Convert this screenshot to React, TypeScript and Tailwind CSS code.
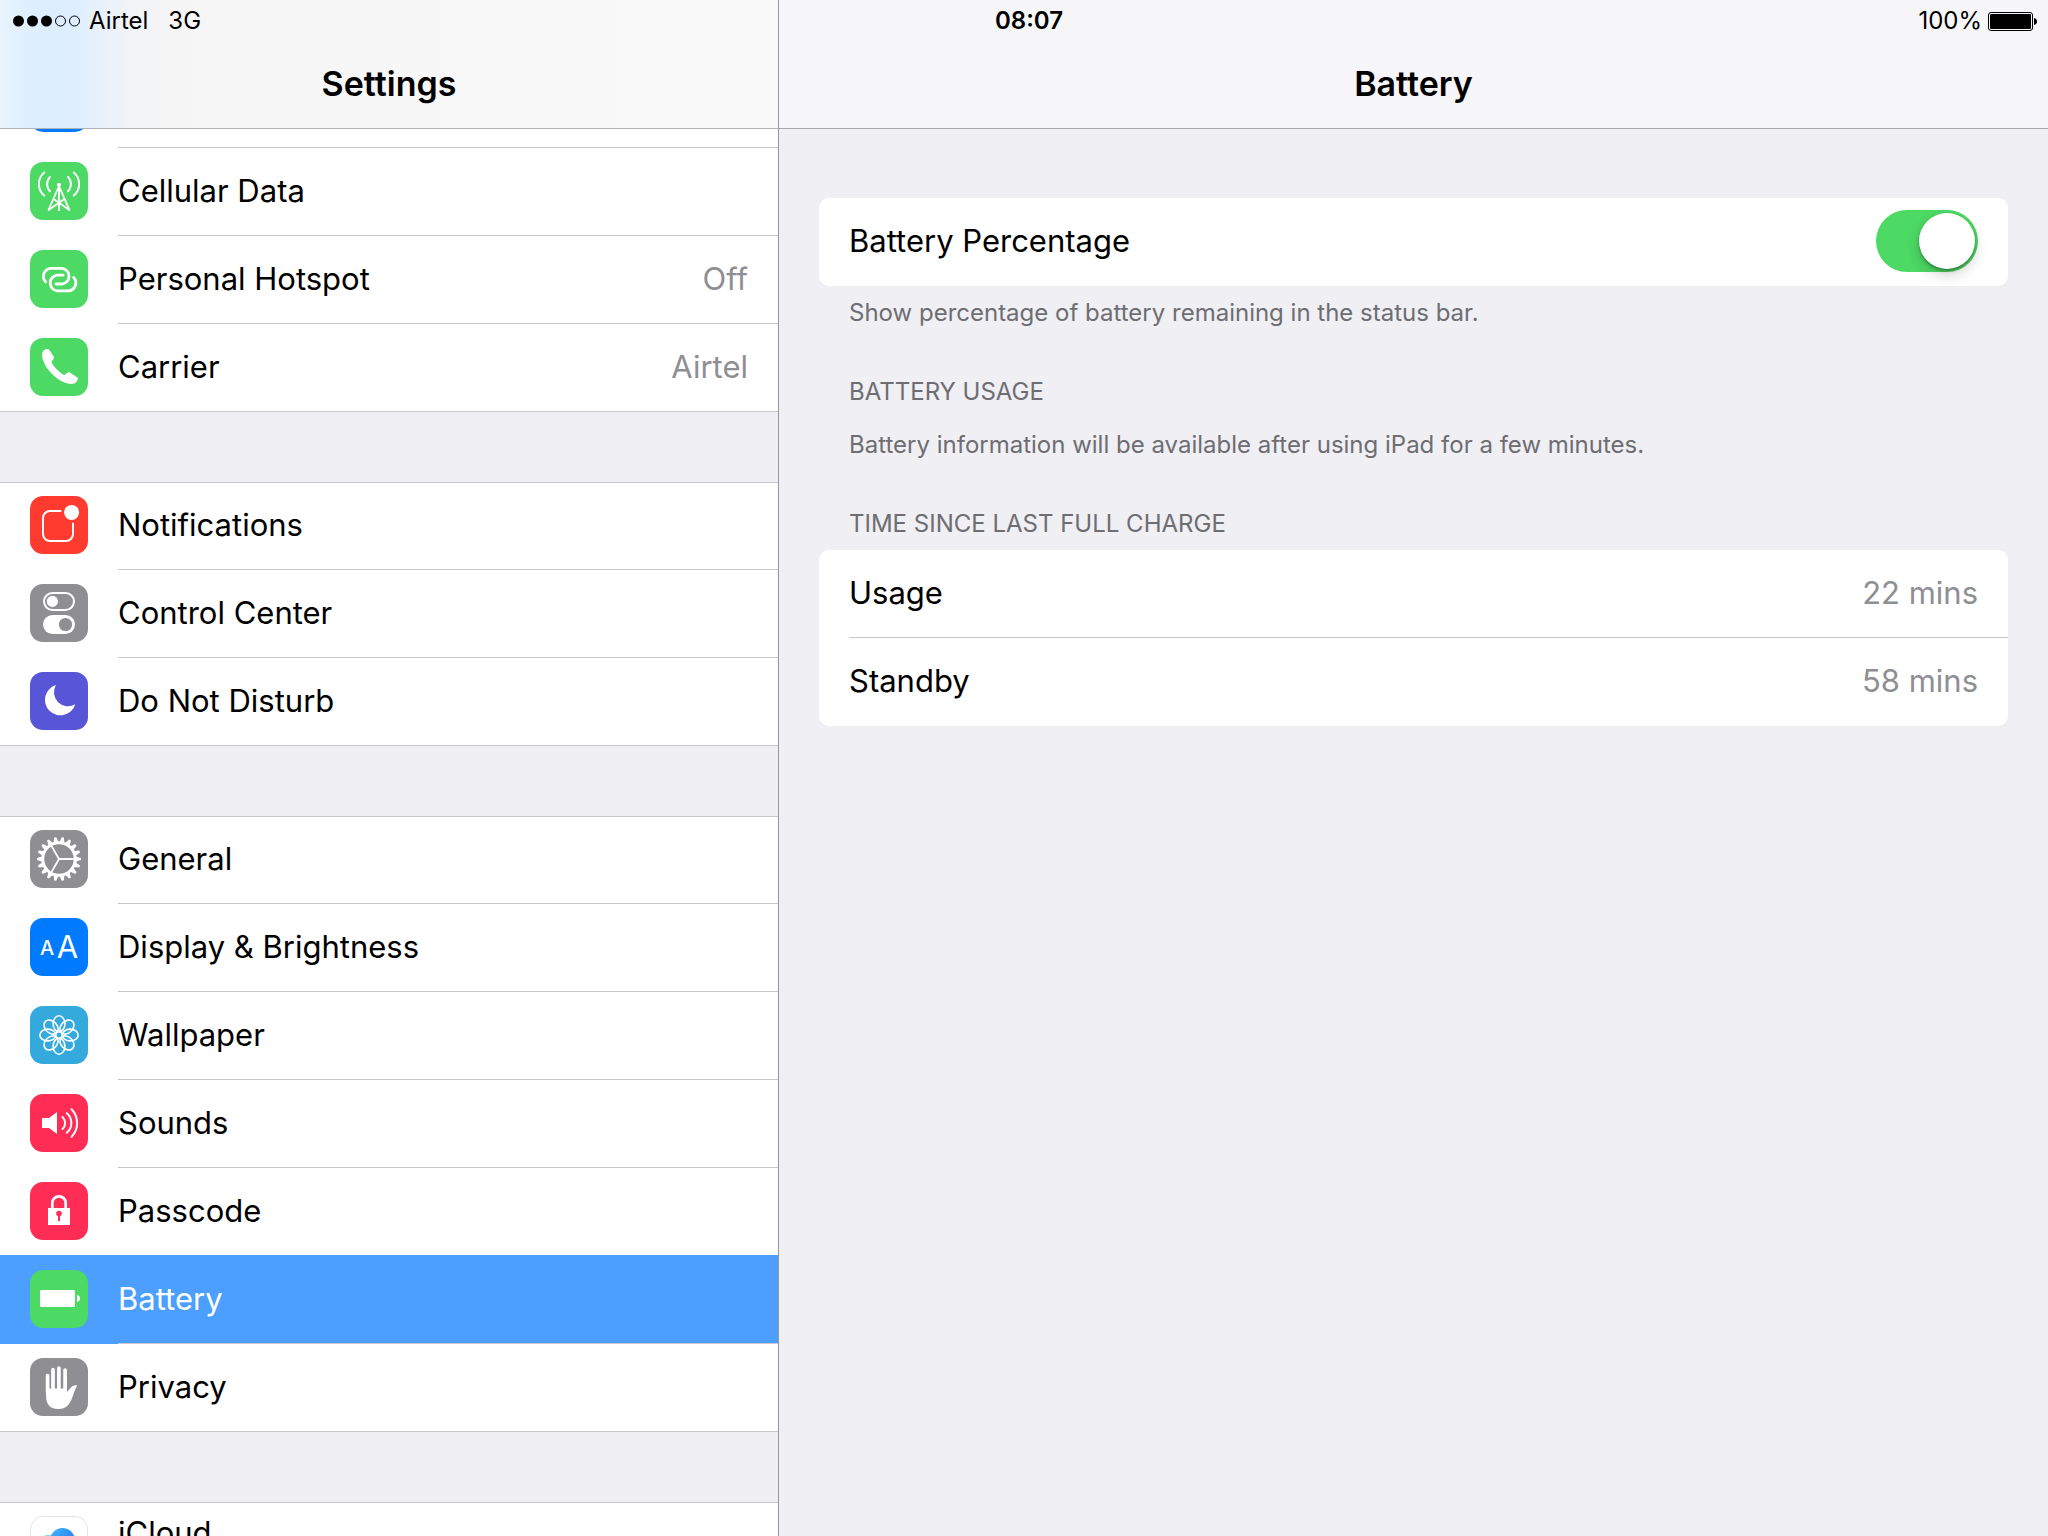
import { useState } from "react";
import type { ReactNode } from "react";

interface Row {
  label: string;
  value?: string;
  color: string;
  icon: ReactNode;
  twoLine?: boolean; // leaves room for a subtitle under the label
}

const gearTeeth = Array.from({ length: 18 }, (_, i) => i * 20);
const petals = Array.from({ length: 8 }, (_, i) => i * 45);

const CellularIcon = (
  <g fill="none" stroke="#fff" strokeWidth="2" strokeLinecap="round">
    <path d="M20 14.9A10.4 10.4 0 0 0 20 29.3M38 14.9A10.4 10.4 0 0 1 38 29.3" />
    <path d="M14.2 10.5A15.2 15.2 0 0 0 14.2 33.6M43.8 10.5A15.2 15.2 0 0 1 43.8 33.6" />
    <circle cx="29" cy="22.8" r="2.1" fill="#fff" stroke="none" />
    <path d="M29 23V49" strokeLinecap="butt" />
    <path d="M28.6 25L18.6 47.8M29.4 25L39.4 47.8" strokeWidth="1.8" />
    <path d="M24 37.2L39 47.8M34 37.2L19 47.8" strokeWidth="1.7" />
  </g>
);

const HotspotIcon = (
  <g fill="none" stroke="#fff" strokeWidth="2.8" strokeLinecap="round">
    <path d="M15.6 31.8A8 8 0 0 1 21 18.3H32A7.9 7.9 0 0 1 32 34H26" />
    <path
      d="M15.6 31.8A8 8 0 0 1 21 18.3H32A7.9 7.9 0 0 1 32 34H26"
      transform="rotate(180 29.6 29.6)"
    />
  </g>
);

const PhoneIcon = (
  <path
    fill="#fff"
    d="M16.5 11C13.5 11.5 12 14 12 17C12.5 29 28 45.5 41.5 46C44.5 46 46.5 44.5 47.8 41.5C48.2 40.3 47.8 39.7 46.8 39L39.8 34.6C38.6 34 37.8 34.3 36.8 35.3C35.8 36.2 34.8 37.6 33 36.5C29 34 24.5 29.5 22 25.3C21.2 23.6 22 22.8 23 21.7C24 20.5 24.3 19.6 23.6 18.6L19.3 11.9C18.6 11 17.8 10.8 16.5 11Z"
  />
);

const NotificationsIcon = (
  <>
    <path
      d="M31.3 15H20a7 7 0 0 0-7 7V38a7 7 0 0 0 7 7H36a7 7 0 0 0 7-7V26.7"
      fill="none"
      stroke="#fff"
      strokeWidth="2"
    />
    <circle cx="41.6" cy="16.4" r="7.5" fill="#fff" />
  </>
);

const ControlCenterIcon = (
  <>
    <rect x="14" y="9" width="30" height="17" rx="8.5" fill="none" stroke="#fff" strokeWidth="2" />
    <circle cx="22.4" cy="17.4" r="5.6" fill="#fff" />
    <rect x="13" y="31" width="32" height="19" rx="9.5" fill="#fff" />
    <circle cx="35.5" cy="40.5" r="6.6" fill="#8e8e93" />
  </>
);

const MoonIcon = (
  <path fill="#fff" d="M26 13A15.5 15.5 0 1 0 45.3 32.2A14 14 0 0 1 26 13Z" />
);

const GearIcon = (
  <>
    {gearTeeth.map((angle) => (
      <path
        key={angle}
        d="M46 26.6L51 27.9V30.1L46 31.4Z"
        fill="#fff"
        transform={`rotate(${angle} 29 29)`}
      />
    ))}
    <circle cx="29" cy="29" r="16.2" fill="none" stroke="#fff" strokeWidth="3" />
    <path d="M29 29H45M29 29L21 15.1M29 29L21 42.9" stroke="#fff" strokeWidth="1.8" />
  </>
);

const DisplayIcon = (
  <g fill="#fff" fontFamily="Inter, sans-serif" textAnchor="middle">
    <text x="17" y="37" fontSize="20" fontWeight="500">A</text>
    <text x="37.5" y="40" fontSize="31" fontWeight="400">A</text>
  </g>
);

const WallpaperIcon = (
  <g fill="none" stroke="#fff" strokeWidth="1.6">
    <circle cx="29" cy="29" r="3.4" />
    {petals.map((angle) => (
      <ellipse
        key={angle}
        cx="29"
        cy="17.8"
        rx="5.9"
        ry="8"
        transform={`rotate(${angle} 29 29)`}
      />
    ))}
  </g>
);

const SoundsIcon = (
  <>
    <path d="M12 24H19L27 18V40L19 34H12Z" fill="#fff" />
    <g fill="none" stroke="#fff" strokeWidth="2" strokeLinecap="round">
      <path d="M32.5 23A8.1 8.1 0 0 1 32.5 35" />
      <path d="M36.8 19.3A12.6 12.6 0 0 1 36.8 38.7" />
      <path d="M41.6 15.3A20 20 0 0 1 41.6 42.9" />
    </g>
  </>
);

const LockIcon = (
  <>
    <rect x="18" y="26" width="22" height="17" fill="#fff" />
    <path d="M22.3 27V21a6.7 6.7 0 0 1 13.4 0V27" fill="none" stroke="#fff" strokeWidth="2.7" />
    <circle cx="29" cy="31.6" r="2.8" fill="#ff2d55" />
    <rect x="28" y="32" width="2" height="7" fill="#ff2d55" />
  </>
);

const BatteryIcon = (
  <>
    <rect x="10" y="20" width="35" height="17" rx="1.4" fill="#fff" />
    <path d="M47 25C51 25.4 51 31.6 47 32Z" fill="#fff" />
  </>
);

const HandIcon = (
  <>
    <path
      d="M17.6 17.6V34M23 11.7V34M28.9 10V34M35.1 12V34"
      stroke="#fff"
      strokeWidth="3.7"
      strokeLinecap="round"
    />
    <path
      fill="#fff"
      d="M16 30.5H37V33.5C38.2 33.3 38.8 32 40.5 30C42.5 27.5 45 26.6 47.3 27.5C45.5 30 44.5 33.5 43 37.5C40.5 45 37.5 51 28.3 51C20.5 51 16 46.5 16 38Z"
    />
  </>
);

const CloudIcon = (
  <>
    <defs>
      <linearGradient id="cloud" x1="0" y1="0" x2="1" y2="1">
        <stop offset="0" stopColor="#40bcf6" />
        <stop offset="0.6" stopColor="#2f86f3" />
      </linearGradient>
    </defs>
    <circle cx="17" cy="25.5" r="7.5" fill="#6fcdf7" />
    <circle cx="31.5" cy="23.5" r="12.5" fill="url(#cloud)" />
  </>
);

const groups: Row[][] = [
  [
    { label: "Cellular Data", color: "bg-[#4cd964]", icon: CellularIcon },
    { label: "Personal Hotspot", value: "Off", color: "bg-[#4cd964]", icon: HotspotIcon },
    { label: "Carrier", value: "Airtel", color: "bg-[#4cd964]", icon: PhoneIcon },
  ],
  [
    { label: "Notifications", color: "bg-[#ff3b30]", icon: NotificationsIcon },
    { label: "Control Center", color: "bg-[#8e8e93]", icon: ControlCenterIcon },
    { label: "Do Not Disturb", color: "bg-[#5856d6]", icon: MoonIcon },
  ],
  [
    { label: "General", color: "bg-[#8e8e93]", icon: GearIcon },
    { label: "Display & Brightness", color: "bg-[#007aff]", icon: DisplayIcon },
    { label: "Wallpaper", color: "bg-[#34aadc]", icon: WallpaperIcon },
    { label: "Sounds", color: "bg-[#ff2d55]", icon: SoundsIcon },
    { label: "Passcode", color: "bg-[#ff2d55]", icon: LockIcon },
    { label: "Battery", color: "bg-[#4cd964]", icon: BatteryIcon },
    { label: "Privacy", color: "bg-[#8e8e93]", icon: HandIcon },
  ],
  [
    {
      label: "iCloud",
      color: "bg-white border border-[#e5e5e5]",
      icon: CloudIcon,
      twoLine: true,
    },
  ],
];

function StatusBar() {
  return (
    <div className="absolute inset-x-0 top-0 z-20 grid h-[42px] grid-cols-3 items-center pl-[13px] pr-[11px] text-[24px] leading-[42px]">
      <div className="flex items-center">
        <svg width="68" height="12" viewBox="0 0 68 12" aria-hidden="true">
          <circle cx="5.5" cy="6" r="5.5" />
          <circle cx="19.5" cy="6" r="5.5" />
          <circle cx="33.5" cy="6" r="5.5" />
          <circle cx="47.5" cy="6" r="5" fill="none" stroke="#000" />
          <circle cx="61.5" cy="6" r="5" fill="none" stroke="#000" />
        </svg>
        <span className="ml-2">Airtel</span>
        <span className="ml-5">3G</span>
      </div>
      <time className="pl-2 text-center font-semibold">08:07</time>
      <div className="flex items-center justify-end gap-1.5">
        <span>100%</span>
        <svg width="49" height="19" viewBox="0 0 49 19" aria-hidden="true">
          <rect x="0.5" y="0.5" width="44" height="18" rx="2.5" fill="none" stroke="#000" />
          <rect x="2" y="2" width="41" height="15" rx="1" />
          <path d="M46 6C50 6.5 50 12.5 46 13Z" />
        </svg>
      </div>
    </div>
  );
}

function Sidebar() {
  const [selected, setSelected] = useState("Battery");

  return (
    <aside className="flex w-[779px] shrink-0 flex-col border-r border-[#97979b]">
      <header className="flex h-[129px] shrink-0 items-center justify-center border-b border-[#b2b2b2] bg-[linear-gradient(90deg,#e8f3fe_0,#dfeffe_28px,#dcedfe_55px,#e0effd_82px,#eaf1fb_104px,#f1f3f7_130px,#f5f5f6_170px,#f7f7f7_300px,#f9f9f9_100%)] pt-10">
        <h1 className="text-[34px] font-semibold leading-[40px]">Settings</h1>
      </header>

      <nav className="flex-1 overflow-hidden">
        {/* tail of the row that is scrolled under the header */}
        <div className="flex h-[19px] items-end overflow-hidden bg-white pl-[30px]">
          <span className="mb-4 size-[58px] shrink-0 rounded-[13px] bg-[#007aff]" />
          <span className="ml-[30px] flex-1 self-stretch border-b border-[#c8c7cc]" />
        </div>

        {groups.map((rows, groupIndex) => (
          <ul
            key={groupIndex}
            className={
              groupIndex === 0
                ? "bg-white shadow-[inset_0_-1px_0_#c8c7cc]"
                : "mt-[70px] bg-white shadow-[inset_0_1px_0_#c8c7cc,inset_0_-1px_0_#c8c7cc]"
            }
          >
            {rows.map((row, i) => {
              const active = row.label === selected;
              const last = i === rows.length - 1;
              return (
                <li key={row.label}>
                  <a
                    href="#"
                    onClick={(e) => {
                      e.preventDefault();
                      setSelected(row.label);
                    }}
                    className={
                      active
                        ? "relative flex h-[88px] items-center bg-[#4c9fff] pl-[30px] text-white shadow-[0_-1px_0_#4c9fff]"
                        : "flex h-[88px] items-center pl-[30px]"
                    }
                  >
                    <span
                      className={`mb-0.5 size-[58px] shrink-0 overflow-hidden rounded-[13px] ${row.color}`}
                    >
                      <svg width="58" height="58" viewBox="0 0 58 58" aria-hidden="true">
                        {row.icon}
                      </svg>
                    </span>
                    <span
                      className={`ml-[30px] flex flex-1 items-center justify-between self-stretch pr-[30px] ${
                        last ? "" : "border-b border-[#c8c7cc]"
                      } ${row.twoLine ? "pb-[26px]" : "pb-0.5"}`}
                    >
                      <span>{row.label}</span>
                      {row.value && <span className="text-[#8e8e93]">{row.value}</span>}
                    </span>
                  </a>
                </li>
              );
            })}
          </ul>
        ))}
      </nav>
    </aside>
  );
}

function BatteryPane() {
  const [showPercentage, setShowPercentage] = useState(true);

  return (
    <main className="flex min-w-0 flex-1 flex-col">
      <header className="flex h-[129px] shrink-0 items-center justify-center border-b border-[#a7a7ab] bg-[#f6f6f8] pt-10">
        <h2 className="text-[34px] font-semibold leading-[40px]">Battery</h2>
      </header>

      <div className="px-10 pt-[69px]">
        <div className="flex h-[88px] items-center justify-between rounded-[10px] bg-white px-[30px] pb-0.5">
          <label htmlFor="battery-percentage">Battery Percentage</label>
          <input
            id="battery-percentage"
            type="checkbox"
            role="switch"
            checked={showPercentage}
            onChange={(e) => setShowPercentage(e.target.checked)}
            className="flex h-[62px] w-[102px] cursor-pointer appearance-none items-center rounded-full bg-[#e5e5ea] px-[3px] before:size-14 before:rounded-full before:bg-white before:shadow-[0_6px_14px_rgba(0,0,0,0.18),0_2px_3px_rgba(0,0,0,0.3)] checked:justify-end checked:bg-[#4cd964]"
          />
        </div>
        <p className="mt-3 px-[30px] text-[24px] leading-[30px] text-[#6d6d72]">
          Show percentage of battery remaining in the status bar.
        </p>

        <h3 className="mt-[49px] px-[30px] text-[24px] leading-[30px] text-[#6d6d72]">
          BATTERY USAGE
        </h3>
        <p className="mt-[23px] px-[30px] text-[24px] leading-[30px] text-[#6d6d72]">
          Battery information will be available after using iPad for a few minutes.
        </p>

        <h3 className="mt-[49px] px-[30px] text-[24px] leading-[30px] text-[#6d6d72]">
          TIME SINCE LAST FULL CHARGE
        </h3>
        <dl className="mt-[11px] rounded-[10px] bg-white pl-[30px]">
          <div className="flex h-[88px] items-center justify-between border-b border-[#c8c7cc] pb-0.5 pr-[30px]">
            <dt>Usage</dt>
            <dd className="text-[#8e8e93]">22 mins</dd>
          </div>
          <div className="flex h-[88px] items-center justify-between pb-0.5 pr-[30px]">
            <dt>Standby</dt>
            <dd className="text-[#8e8e93]">58 mins</dd>
          </div>
        </dl>
      </div>
    </main>
  );
}

export default function App() {
  return (
    <div className="relative flex h-screen overflow-hidden bg-[#efeff4] font-['Inter',sans-serif] text-[31px] leading-[40px] text-black">
      <StatusBar />
      <Sidebar />
      <BatteryPane />
    </div>
  );
}
